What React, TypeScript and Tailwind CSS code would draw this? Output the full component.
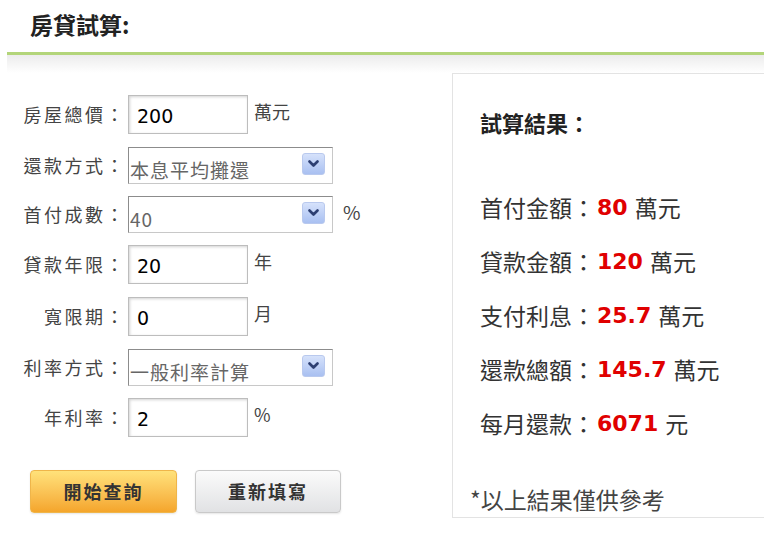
import React from "react";

const cjk = { fontFamily: '"Noto Sans CJK TC", "Noto Sans", sans-serif' };
const num = { fontFamily: '"DejaVu Sans", Verdana, sans-serif' };

function Label({ text }: { text: string }) {
  return (
    <label className="w-[119px] mr-[2px] text-right text-[18px] tracking-[2.5px] text-[#444] shrink-0">
      {text}
    </label>
  );
}

function TextField({ label, value, unit }: { label: string; value: string; unit: string }) {
  return (
    <div className="flex items-center h-[39px]">
      <Label text={label} />
      <input
        defaultValue={value}
        style={num}
        className="w-[120px] h-[39px] border border-[#bdbdbd] bg-white pl-[8px] pt-[3px] text-[19px] text-black outline-none shadow-[inset_1px_1px_3px_rgba(0,0,0,0.18)]"
      />
      <span className="ml-[6px] text-[18px] text-[#444] -mt-[6px]">{unit}</span>
    </div>
  );
}

function SelectField({ label, options, unit }: { label: string; options: string[]; unit?: string }) {
  return (
    <div className="flex items-center h-[36px]">
      <Label text={label} />
      <div className="relative w-[205px] h-[37px]">
        <select
          style={cjk}
          className="appearance-none w-full h-full border border-[#c8c8c8] border-t-[#8c8c8c] border-l-[#8c8c8c] bg-white pl-[1px] pt-[8px] text-[19px] tracking-[1px] text-[#666] outline-none"
        >
          {options.map((o) => (
            <option key={o}>{o}</option>
          ))}
        </select>
        <div className="pointer-events-none absolute right-[8px] top-[6px] w-[23px] h-[22px] rounded-[3px] border border-[#b9c9ee] bg-gradient-to-b from-[#d6e2fb] to-[#a9c0f1] flex items-center justify-center">
          <svg width="11" height="8" viewBox="0 0 11 8">
            <path d="M1.5 1.5 L5.5 5.5 L9.5 1.5" fill="none" stroke="#2d3f72" strokeWidth="2.6" strokeLinecap="round" strokeLinejoin="round" />
          </svg>
        </div>
      </div>
      {unit && <span className="ml-[10px] text-[19px] text-[#444] -mt-[4px]">{unit}</span>}
    </div>
  );
}

function ResultRow({ label, value, unit }: { label: string; value: string; unit: string }) {
  return (
    <div className="ml-[27px] h-[33px] flex items-center text-[23px] text-[#333]">
      <span>{label}</span>
      <span style={num} className="text-[22px] font-bold text-[#e00000] ml-[2px] mr-[7px]">{value}</span>
      <span>{unit}</span>
    </div>
  );
}

export default function App() {
  return (
    <div style={cjk} className="w-[776px] h-[555px] bg-white overflow-hidden">
      <div className="h-[52px] pl-[30px] pt-[7px]">
        <h1 className="text-[23px] font-bold text-[#222]">房貸試算:</h1>
      </div>

      <div className="ml-[7px] mr-[12px]">
        <div className="h-[3px] bg-[#b3d57a]" />
        <div className="h-[18px] bg-gradient-to-b from-[#ececec] to-white" />

        <div className="flex">
          <div className="flex-1 pt-[22px]">
            <form className="flex flex-col gap-[13px]">
              <TextField label="房屋總價：" value="200" unit="萬元" />
              <SelectField label="還款方式：" options={["本息平均攤還", "本金平均攤還"]} />
              <SelectField label="首付成數：" options={["40", "30", "20"]} unit="%" />
              <TextField label="貸款年限：" value="20" unit="年" />
              <TextField label="寬限期：" value="0" unit="月" />
              <SelectField label="利率方式：" options={["一般利率計算", "分段利率計算"]} />
              <TextField label="年利率：" value="2" unit="%" />
            </form>

            <div className="flex gap-[18px] ml-[23px] mt-[33px]">
              <button className="w-[147px] h-[43px] rounded-[4px] border border-[#efb54a] bg-gradient-to-b from-[#ffe27a] to-[#f4a52a] text-[18px] font-bold tracking-[2px] text-[#333] shadow-[0_1px_2px_rgba(0,0,0,0.1)]">
                開始查詢
              </button>
              <button className="w-[146px] h-[43px] rounded-[4px] border border-[#c9c9c9] bg-gradient-to-b from-[#fbfbfb] to-[#e1e2e4] text-[18px] font-bold tracking-[2px] text-[#333] shadow-[0_1px_2px_rgba(0,0,0,0.1)]">
                重新填寫
              </button>
            </div>
          </div>

          <div className="w-[312px] h-[445px] border-l border-t border-b border-[#e3e3e3] pt-[32px]">
            <div className="ml-[27px] h-[33px] flex items-center text-[22px] font-bold text-[#222]">試算結果：</div>
            <div className="mt-[52px] flex flex-col gap-[21px]">
              <ResultRow label="首付金額：" value="80" unit="萬元" />
              <ResultRow label="貸款金額：" value="120" unit="萬元" />
              <ResultRow label="支付利息：" value="25.7" unit="萬元" />
              <ResultRow label="還款總額：" value="145.7" unit="萬元" />
              <ResultRow label="每月還款：" value="6071" unit="元" />
            </div>
            <div className="ml-[17px] mt-[43px] h-[33px] flex items-center text-[23px] text-[#444]">*以上結果僅供參考</div>
          </div>
        </div>
      </div>
    </div>
  );
}
